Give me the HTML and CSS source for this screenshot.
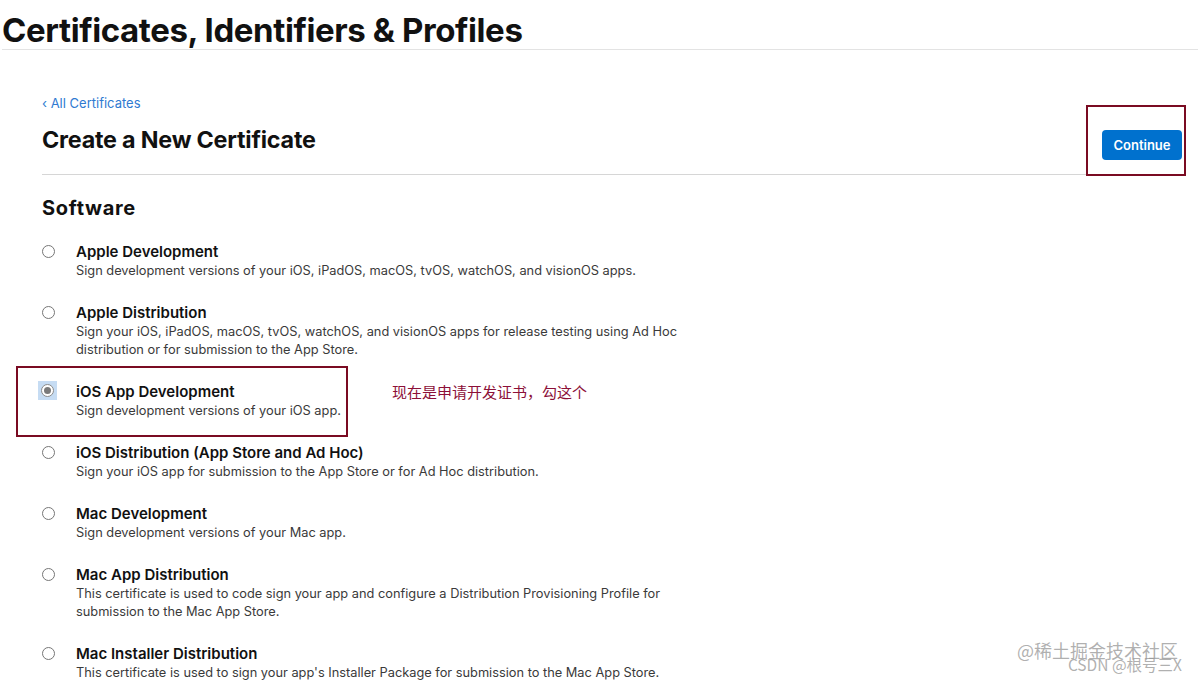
FILE: index.html
```html
<!DOCTYPE html>
<html lang="en">
<head>
<meta charset="utf-8">
<title>Certificates, Identifiers &amp; Profiles</title>
<link rel="stylesheet" href="styles.css">
</head>
<body>
<header class="top">
  <h1 class="top-title">Certificates, Identifiers &amp; Profiles</h1>
</header>
<main class="main">
  <div class="page-head">
    <div class="page-head-text">
      <a class="back" href="#">‹ All Certificates</a>
      <h2 class="page-title">Create a New Certificate</h2>
    </div>
    <div class="annot-box annot-btn">
      <button class="btn-continue" type="button">Continue</button>
    </div>
  </div>

  <h3 class="section-title">Software</h3>

  <ul class="options">
    <li class="option">
      <span class="radio"></span>
      <div class="option-body">
        <div class="option-name">Apple Development</div>
        <div class="option-desc">Sign development versions of your iOS, iPadOS, macOS, tvOS, watchOS, and visionOS apps.</div>
      </div>
    </li>
    <li class="option">
      <span class="radio"></span>
      <div class="option-body">
        <div class="option-name">Apple Distribution</div>
        <div class="option-desc">Sign your iOS, iPadOS, macOS, tvOS, watchOS, and visionOS apps for release testing using Ad Hoc<br>distribution or for submission to the App Store.</div>
      </div>
    </li>
    <li class="option-row">
      <div class="option annot-box annot-item">
        <span class="radio-focus"><span class="radio checked"></span></span>
        <div class="option-body">
          <div class="option-name">iOS App Development</div>
          <div class="option-desc">Sign development versions of your iOS app.</div>
        </div>
      </div>
      <div class="annot-note">现在是申请开发证书，勾这个</div>
    </li>
    <li class="option">
      <span class="radio"></span>
      <div class="option-body">
        <div class="option-name">iOS Distribution (App Store and Ad Hoc)</div>
        <div class="option-desc">Sign your iOS app for submission to the App Store or for Ad Hoc distribution.</div>
      </div>
    </li>
    <li class="option">
      <span class="radio"></span>
      <div class="option-body">
        <div class="option-name">Mac Development</div>
        <div class="option-desc">Sign development versions of your Mac app.</div>
      </div>
    </li>
    <li class="option">
      <span class="radio"></span>
      <div class="option-body">
        <div class="option-name">Mac App Distribution</div>
        <div class="option-desc">This certificate is used to code sign your app and configure a Distribution Provisioning Profile for<br>submission to the Mac App Store.</div>
      </div>
    </li>
    <li class="option">
      <span class="radio"></span>
      <div class="option-body">
        <div class="option-name">Mac Installer Distribution</div>
        <div class="option-desc">This certificate is used to sign your app's Installer Package for submission to the Mac App Store.</div>
      </div>
    </li>
  </ul>
</main>
<div class="watermark">
  <div class="wm-1">@稀土掘金技术社区</div>
  <div class="wm-2">CSDN @根号三X</div>
</div>
</body>
</html>
```

FILE: styles.css
```css
* { box-sizing: border-box; }
html, body { margin: 0; padding: 0; }
body {
  background: #fff;
  color: #1d1d1f;
  font-family: Inter, "Noto Sans", "Liberation Sans", sans-serif;
  width: 1198px;
  height: 680px;
  overflow: hidden;
  position: relative;
}
.top {
  border-bottom: 1px solid #e3e3e3;
  margin-left: 2px;
}
.top-title {
  margin: 0;
  padding-top: 11px;
  font-size: 33px;
  line-height: 38px;
  font-weight: 700;
  letter-spacing: -0.4px;
  color: #111;
}
.main {
  padding: 44px 12px 0 42px;
}
.page-head {
  display: flex;
  justify-content: space-between;
  align-items: flex-end;
  border-bottom: 1px solid #d6d6d6;
}
.back {
  display: block;
  font-size: 13px;
  line-height: 18px;
  color: #2f7ad1;
  text-decoration: none;
}
.page-title {
  margin: 12px 0 0;
  font-size: 23.3px;
  line-height: 32px;
  font-weight: 700;
  letter-spacing: -0.2px;
  color: #111;
  padding-bottom: 18px;
}
.annot-box {
  border: 2px solid #7a0b22;
  background: #fff;
}
.annot-btn {
  width: 100px;
  padding: 23px 2px 14px 14px;
  margin-bottom: -2px;
}
.btn-continue {
  display: block;
  width: 80px;
  height: 30px;
  border: 0;
  border-radius: 4px;
  background: #0071ce;
  color: #fff;
  font-family: inherit;
  font-size: 13px;
  font-weight: 600;
  padding: 0;
}
.section-title {
  margin: 21px 0 0;
  font-size: 20px;
  line-height: 24px;
  font-weight: 700;
  letter-spacing: 0.7px;
  color: #111;
}
.options {
  list-style: none;
  margin: 22px 0 0;
  padding: 0;
  display: flex;
  flex-direction: column;
  gap: 23px;
}
.option {
  display: flex;
  gap: 21px;
}
.radio {
  flex: none;
  width: 13px;
  height: 13px;
  margin-top: 3px;
  border-radius: 50%;
  border: 1px solid #767676;
  background: #fff;
  position: relative;
}
.radio.checked { margin-top: 0; border-color: #8a8a8a; }
.radio.checked::after {
  content: "";
  position: absolute;
  left: 2px; top: 2px;
  width: 7px; height: 7px;
  border-radius: 50%;
  background: #7a7a7a;
}
.radio-focus {
  flex: none;
  width: 19px;
  height: 19px;
  margin: 0 -2px 0 -2px;
  display: flex;
  align-items: center;
  justify-content: center;
  background: #c6dcf3;
}
.option-name {
  font-size: 15px;
  line-height: 20px;
  font-weight: 600;
  color: #111;
}
.option-desc {
  font-size: 12.8px;
  line-height: 18px;
  color: #3a3a3a;
}
.option-row {
  display: flex;
  align-items: flex-start;
  gap: 44px;
}
.annot-item {
  width: 332px;
  margin: -16px 0 -17px -26px;
  padding: 14px 0 15px 22px;
}
.annot-item .radio-focus { margin-top: -1px; }
.annot-note {
  font-family: "Noto Sans CJK SC", sans-serif;
  font-size: 15px;
  line-height: 20px;
  color: #8c1038;
}
.watermark {
  position: absolute;
  right: 16px;
  bottom: 8px;
  text-align: right;
  color: rgba(150,150,150,0.75);
  font-family: "Noto Sans CJK SC", sans-serif;
}
.wm-1 { font-size: 18px; line-height: 18px; margin-right: 4px; }
.wm-2 { font-size: 15.5px; line-height: 16px; margin-top: -3px; }
```
